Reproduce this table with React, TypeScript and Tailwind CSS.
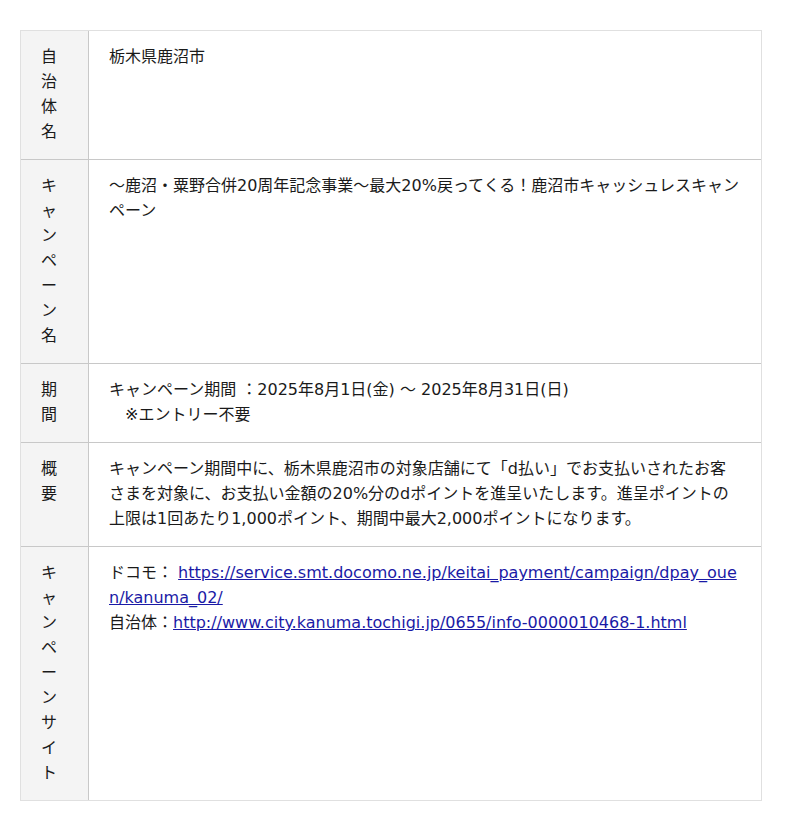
const rows: { label: string; body: React.ReactNode }[] = [
  { label: "自治体名", body: <p>栃木県鹿沼市</p> },
  {
    label: "キャンペーン名",
    body: <p>〜鹿沼・粟野合併20周年記念事業〜最大20%戻ってくる！鹿沼市キャッシュレスキャンペーン</p>,
  },
  {
    label: "期間",
    body: (
      <>
        <p>キャンペーン期間 ：2025年8月1日(金) 〜 2025年8月31日(日)</p>
        <p>　※エントリー不要</p>
      </>
    ),
  },
  {
    label: "概要",
    body: (
      <p>
        キャンペーン期間中に、栃木県鹿沼市の対象店舗にて「d払い」でお支払いされたお客さまを対象に、お支払い金額の20%分のdポイントを進呈いたします。進呈ポイントの上限は1回あたり1,000ポイント、期間中最大2,000ポイントになります。
      </p>
    ),
  },
  {
    label: "キャンペーンサイト",
    body: (
      <>
        <p>
          ドコモ：{" "}
          <a href="#" className="text-[#1a1aa6] underline break-all">
            https://service.smt.docomo.ne.jp/keitai_payment/campaign/dpay_ouen/kanuma_02/
          </a>
        </p>
        <p>
          自治体：
          <a href="#" className="text-[#1a1aa6] underline break-all">
            http://www.city.kanuma.tochigi.jp/0655/info-0000010468-1.html
          </a>
        </p>
      </>
    ),
  },
];

export default function App() {
  return (
    <div
      className="min-h-[831px] bg-white pt-[30px] pl-5 text-[#1a1a1a] text-base leading-[25px]"
      style={{ fontFamily: '"DejaVu Sans", "Noto Sans CJK JP", sans-serif' }}
    >
      <div className="w-[742px] border border-[#e0e0e0]">
        {rows.map((row, i) => (
          <div
            key={row.label}
            className={`flex ${i > 0 ? "border-t border-[#c8c8c8]" : ""}`}
          >
            {/* Label column */}
            <div className="w-[68px] shrink-0 bg-[#f4f4f4] border-r border-[#c8c8c8] pl-5 pr-[27px] pt-[13px] pb-[15px]">
              {row.label}
            </div>
            <div className="flex-1 min-w-0 pl-5 pr-[21px] pt-[13px] pb-[15px]">
              {row.body}
            </div>
          </div>
        ))}
      </div>
    </div>
  );
}
